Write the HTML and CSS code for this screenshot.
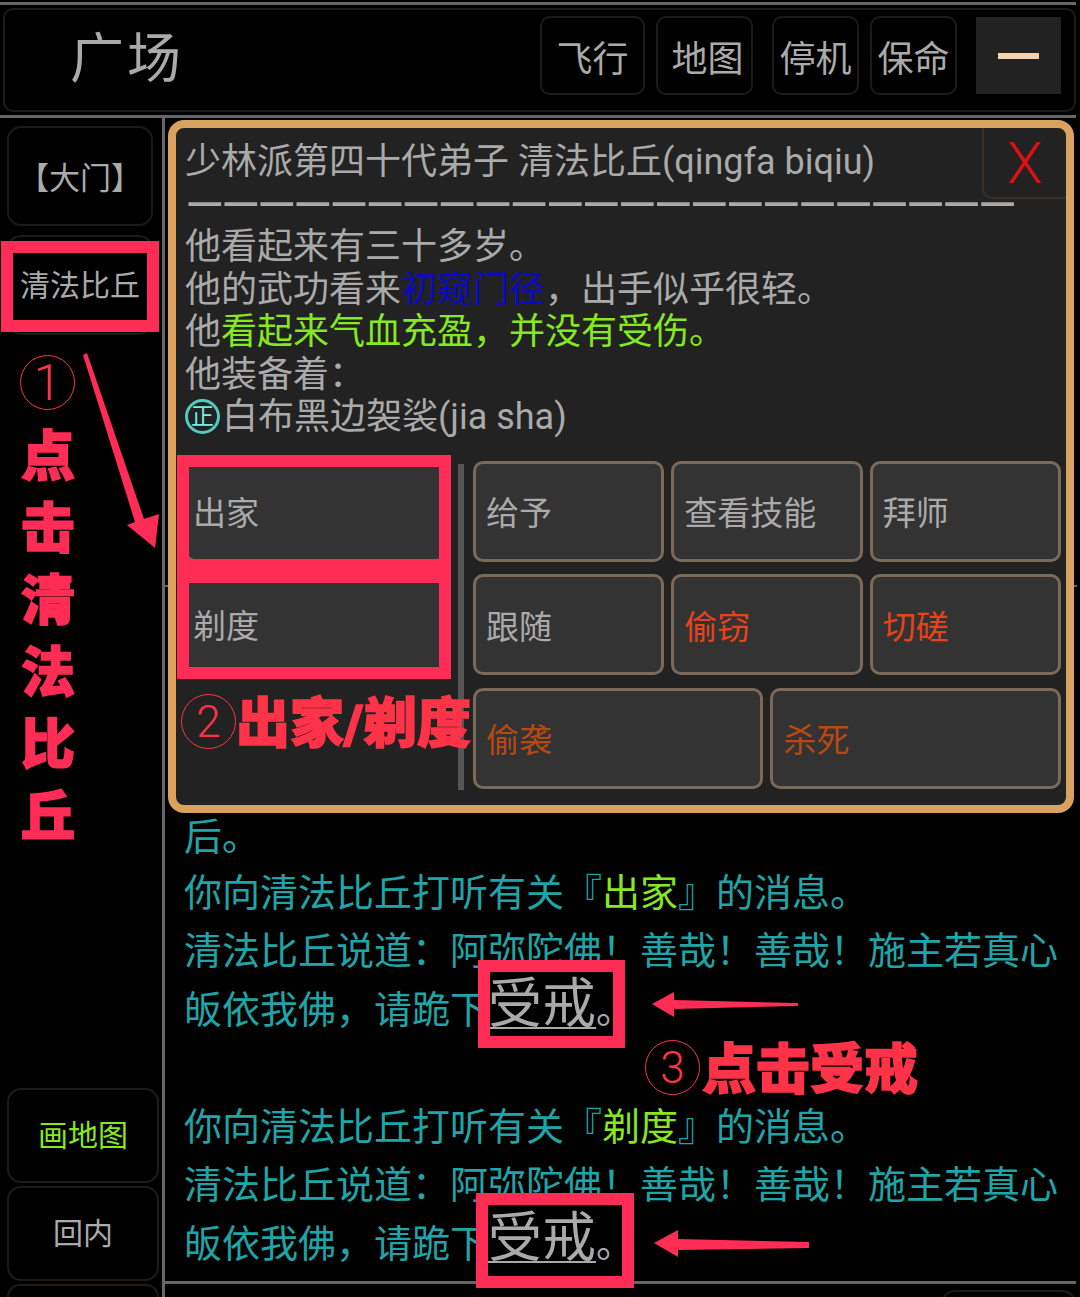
FILE: index.html
```html
<!DOCTYPE html>
<html lang="zh-CN">
    <head>
        <meta charset="utf-8">
        <title>广场</title>
        <link rel="stylesheet" href="styles.css">
    </head>
    <body>
        <div class="top-bar">
            <div class="room-name">广场</div>
            <div class="top-actions">
                <div class="top-btn btn-fly">飞行</div>
                <div class="top-btn btn-map">地图</div>
                <div class="top-btn btn-idle">停机</div>
                <div class="top-btn btn-save">保命</div>
                <div class="minimize"><span class="minimize-dash"></span></div>
            </div>
        </div>

        <div class="main">
            <div class="sidebar">
                <div class="side-btn side-narrow side-exit">【大门】</div>
                <div class="side-btn side-narrow side-npc">清法比丘</div>
                <div class="side-spacer"></div>
                <div class="side-btn side-draw green">画地图</div>
                <div class="side-btn side-draw">回内</div>
                <div class="side-btn side-draw side-cut"></div>
            </div>

            <div class="content">
                <div class="log">
                    <p class="log-top">后。</p>
                    <p>你向清法比丘打听有关『<span class="green">出家</span>』的消息。</p>
                    <p>清法比丘说道：阿弥陀佛！善哉！善哉！施主若真心皈依我佛，请跪下<span class="cmd">受戒</span><span class="cmd-end">。</span></p>
                    <p class="log-gap">你向清法比丘打听有关『<span class="green">剃度</span>』的消息。</p>
                    <p>清法比丘说道：阿弥陀佛！善哉！善哉！施主若真心皈依我佛，请跪下<span class="cmd">受戒</span><span class="cmd-end">。</span></p>
                </div>
                <div class="footer">
                    <div class="footer-btn"></div>
                </div>
            </div>
        </div>

        <div class="rear-line"></div>

        <div class="dialog">
            <div class="close-btn">X</div>
            <div class="dialog-text">
                <div>少林派第四十代弟子 清法比丘(qingfa biqiu)</div>
                <div class="rule">———————————————————————</div>
                <div>他看起来有三十多岁。</div>
                <div>他的武功看来<span class="blue">初窥门径</span>，出手似乎很轻。</div>
                <div>他<span class="green">看起来气血充盈，并没有受伤。</span></div>
                <div>他装备着：</div>
                <div><span class="equip-mark">正</span>白布黑边袈裟(jia sha)</div>
            </div>
            <div class="dialog-actions">
                <div class="special-col">
                    <div class="act-btn">出家</div>
                    <div class="act-btn">剃度</div>
                </div>
                <div class="col-divider"></div>
                <div class="act-grid">
                    <div class="act-btn span-2">给予</div>
                    <div class="act-btn span-2">查看技能</div>
                    <div class="act-btn span-2">拜师</div>
                    <div class="act-btn span-2">跟随</div>
                    <div class="act-btn span-2 danger">偷窃</div>
                    <div class="act-btn span-2 danger">切磋</div>
                    <div class="act-btn span-3 deadly">偷袭</div>
                    <div class="act-btn span-3 deadly">杀死</div>
                </div>
            </div>
        </div>

        <!-- red notes drawn on top of the screenshot -->
        <div class="mark mark-npc"></div>
        <div class="mark mark-chujia"></div>
        <div class="mark mark-tidu"></div>
        <div class="mark mark-cmd1"></div>
        <div class="mark mark-cmd2"></div>

        <div class="step-num step-1">1</div>
        <div class="step-label step-label-1">点<br>击<br>清<br>法<br>比<br>丘</div>
        <div class="step-num step-2">2</div>
        <div class="step-label step-label-2">出家/剃度</div>
        <div class="step-num step-3">3</div>
        <div class="step-label step-label-3">点击受戒</div>

        <svg class="arrows" xmlns="http://www.w3.org/2000/svg" width="1080" height="1297" viewBox="0 0 1080 1297">
            <polygon points="83,355 87,353 144,519 159,514 155,548 127,525 135,522" fill="#ff2d55"/>
            <polygon points="652,1004 674,992 674,1000 798,1003 798,1006 674,1009 674,1017" fill="#ff2d55"/>
            <polygon points="654,1243 678,1230 678,1239 809,1242 809,1248 678,1250 678,1257" fill="#ff2d55"/>
        </svg>
    </body>
</html>
```

FILE: styles.css
```css
* {
    box-sizing: border-box;
}

html, body {
    margin: 0;
    padding: 0;
}

body {
    position: relative;
    width: 1080px;
    height: 1297px;
    overflow: hidden;
    background: #000;
    color: #aaa;
    font-family: Roboto, "Noto Sans CJK SC", sans-serif;
}

.green {
    color: #86e820;
}

.blue {
    color: #0a0ac4;
}

/* top bar */
.top-bar {
    display: flex;
    align-items: center;
    justify-content: space-between;
    height: 116px;
    margin-top: 2px;
    margin-right: 4px;
    padding: 3px 0 3px 3px;
    border-top: 3px solid #666;
    border-bottom: 3px solid #666;
}

.room-name {
    flex: 1;
    height: 100%;
    padding-left: 65px;
    font-size: 54px;
    letter-spacing: 3px;
    line-height: 100px;
    border: 2px solid #1f1a17;
    border-right: none;
    border-radius: 10px 0 0 10px;
}

.top-actions {
    display: flex;
    align-items: center;
    height: 100%;
    padding: 0 13px 9px 0;
    border: 2px solid #1f1a17;
    border-left: none;
    border-radius: 0 10px 10px 0;
}

.top-btn {
    display: flex;
    align-items: center;
    justify-content: center;
    height: 79px;
    font-size: 36px;
    border: 2px solid #201a16;
    border-radius: 10px;
}

.btn-fly {
    width: 105px;
    margin-right: 11px;
}

.btn-map {
    width: 97px;
    margin-right: 19px;
    padding-left: 6px;
}

.btn-idle {
    width: 87px;
    margin-right: 11px;
}

.btn-save {
    width: 87px;
    margin-right: 19px;
}

.minimize {
    display: flex;
    align-items: center;
    justify-content: center;
    width: 85px;
    height: 77px;
    background: #222;
}

.minimize-dash {
    width: 41px;
    height: 6px;
    background: #f2d3ad;
}

/* body of the page */
.main {
    display: flex;
    height: 1179px;
}

.sidebar {
    display: flex;
    flex-direction: column;
    flex: 0 0 165px;
    padding: 8px 3px 0 7px;
    border-right: 3px solid #666;
}

.side-btn {
    display: flex;
    align-items: center;
    justify-content: center;
    flex: none;
    font-size: 30px;
    border: 2px solid #201a16;
    border-radius: 14px;
}

.side-narrow {
    width: 146px;
    height: 100px;
    margin-bottom: 9px;
}

.side-exit {
    padding-bottom: 2px;
    font-size: 31px;
}

.side-npc {
    padding-bottom: 4px;
}

.side-spacer {
    flex: 1;
}

.side-draw {
    width: 152px;
    height: 95px;
    margin-bottom: 3px;
    padding-bottom: 5px;
}

.side-cut {
    height: 13px;
    margin-bottom: 0;
    padding-bottom: 0;
    border-bottom: none;
    border-radius: 14px 14px 0 0;
}

.content {
    display: flex;
    flex-direction: column;
    flex: 1;
    min-width: 0;
}

.log {
    display: flex;
    flex-direction: column;
    justify-content: flex-end;
    flex: 1;
    min-height: 0;
    padding: 0 18px 8px 19px;
    color: #1fa5a8;
    font-size: 38px;
    line-height: 58.5px;
}

.log p {
    margin: 0;
}

.log .log-top {
    margin-bottom: -3px;
}

.log .log-gap {
    margin-top: 58.5px;
}

.cmd {
    color: #aaa;
    font-size: 54px;
    line-height: 0;
    text-decoration: underline;
    text-decoration-thickness: 2px;
    text-underline-offset: 4px;
}

.cmd-end {
    color: #aaa;
}

.footer {
    flex: 0 0 16px;
    margin-right: 4px;
    padding-top: 6px;
    overflow: hidden;
    border-top: 3px solid #666;
}

.footer-btn {
    width: 135px;
    height: 40px;
    margin-left: auto;
    border: 2px solid #201a16;
    border-radius: 14px;
}

.rear-line {
    position: absolute;
    left: 165px;
    top: 585px;
    width: 912px;
    height: 2px;
    background: #666;
}

/* npc dialog */
.dialog {
    position: absolute;
    left: 168px;
    top: 120px;
    width: 906px;
    height: 693px;
    padding: 13px 5px 0 9px;
    background: #222;
    border: 8px solid #dba25f;
    border-radius: 16px;
}

.close-btn {
    position: absolute;
    right: 0;
    top: 0;
    width: 84px;
    height: 71px;
    color: #e01010;
    font-size: 58px;
    font-weight: 300;
    line-height: 70px;
    text-align: center;
    border: 2px solid #3a302a;
    border-top: none;
    border-right: none;
    border-radius: 0 0 0 10px;
}

.dialog-text {
    font-size: 36px;
    line-height: 42.5px;
    white-space: nowrap;
}

.rule {
    font-size: 50px;
    letter-spacing: -3px;
}

.equip-mark {
    display: inline-flex;
    align-items: center;
    justify-content: center;
    width: 35px;
    height: 35px;
    margin-right: 2px;
    color: #70f0e0;
    font-size: 23px;
    line-height: 1;
    vertical-align: 5px;
    border: 3px solid #55c8c0;
    border-radius: 50%;
}

.dialog-actions {
    display: flex;
    margin-top: 22px;
}

.special-col {
    display: flex;
    flex-direction: column;
    gap: 12px;
    flex: 0 0 261px;
}

.col-divider {
    flex: 0 0 6px;
    height: 326px;
    margin: 3px 9px 0 12px;
    background: #555;
}

.act-btn {
    display: flex;
    align-items: center;
    height: 101px;
    padding-left: 10px;
    font-size: 33px;
    background: #333;
    border: 3px solid #7b6a5a;
    border-radius: 10px;
}

.special-col .act-btn {
    padding-left: 5px;
}

.act-grid {
    display: grid;
    flex: none;
    grid-template-columns: repeat(6, 1fr);
    gap: 12px 7px;
    width: 588px;
}

.span-2 {
    grid-column: span 2;
}

.span-3 {
    grid-column: span 3;
}

.danger {
    color: #e8421a;
}

.deadly {
    color: #b44a12;
}

/* red notes */
.mark {
    position: absolute;
    border: 12px solid #ff2d55;
}

.mark-npc {
    left: 1px;
    top: 241px;
    width: 158px;
    height: 91px;
}

.mark-chujia {
    left: 177px;
    top: 455px;
    width: 274px;
    height: 116px;
}

.mark-tidu {
    left: 177px;
    top: 571px;
    width: 274px;
    height: 108px;
}

.mark-cmd1 {
    left: 478px;
    top: 960px;
    width: 147px;
    height: 88px;
}

.mark-cmd2 {
    left: 476px;
    top: 1193px;
    width: 158px;
    height: 95px;
}

.step-num {
    position: absolute;
    display: flex;
    align-items: center;
    justify-content: center;
    width: 55px;
    height: 55px;
    color: #ff3348;
    font-size: 44px;
    font-weight: 300;
    border: 1px solid #ff3348;
    border-radius: 50%;
}

.step-1 {
    left: 20px;
    top: 355px;
    font-size: 50px;
}

.step-2 {
    left: 181px;
    top: 694px;
}

.step-3 {
    left: 645px;
    top: 1040px;
}

.step-label {
    position: absolute;
    color: #ff3348;
    font-size: 54px;
    font-weight: 900;
    -webkit-text-stroke: 1.5px #ff3348;
    white-space: nowrap;
}

.step-label-1 {
    left: 21px;
    top: 422px;
    color: #ff2d55;
    line-height: 72px;
    -webkit-text-stroke-color: #ff2d55;
}

.step-label-2 {
    left: 236px;
    top: 686px;
    line-height: 78px;
}

.step-label-3 {
    left: 702px;
    top: 1032px;
    line-height: 78px;
}

.arrows {
    position: absolute;
    left: 0;
    top: 0;
}
```
